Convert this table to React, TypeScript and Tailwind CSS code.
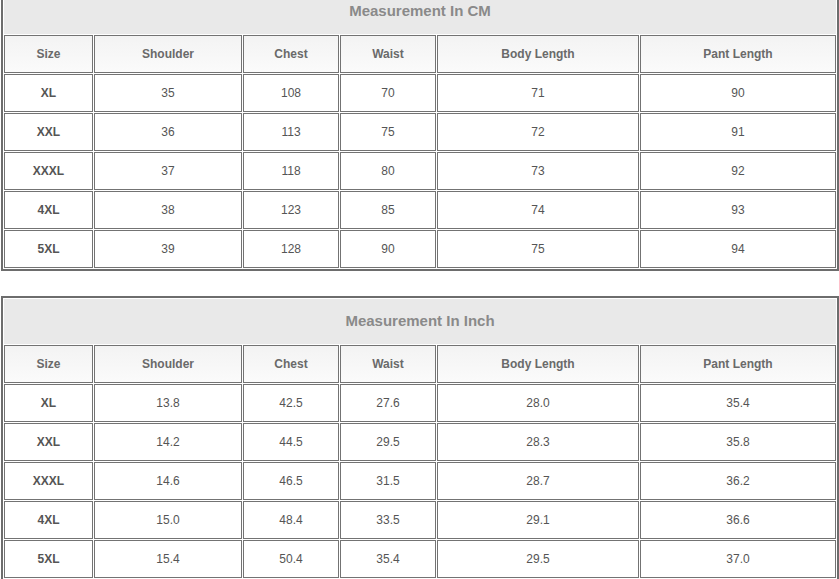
const headers = ["Size", "Shoulder", "Chest", "Waist", "Body Length", "Pant Length"];

const cmRows = [
  ["XL", "35", "108", "70", "71", "90"],
  ["XXL", "36", "113", "75", "72", "91"],
  ["XXXL", "37", "118", "80", "73", "92"],
  ["4XL", "38", "123", "85", "74", "93"],
  ["5XL", "39", "128", "90", "75", "94"],
];

const inchRows = [
  ["XL", "13.8", "42.5", "27.6", "28.0", "35.4"],
  ["XXL", "14.2", "44.5", "29.5", "28.3", "35.8"],
  ["XXXL", "14.6", "46.5", "31.5", "28.7", "36.2"],
  ["4XL", "15.0", "48.4", "33.5", "29.1", "36.6"],
  ["5XL", "15.4", "50.4", "35.4", "29.5", "37.0"],
];

const SizeTable = ({ title, rows, className }: { title: string; rows: string[][]; className?: string }) => {
  return (
    <div
      className={`ml-[1px] w-[838px] border-2 border-[#6d6d6d] p-px grid grid-cols-[89px_148px_96px_96px_202px_196px] gap-px ${className ?? ""}`}
    >
      <div className="col-span-6 h-[45px] bg-[#e9e9e9] flex items-center justify-center text-[15px] font-bold text-[#8a8a8a]">
        {title}
      </div>
      {headers.map((h) => (
        <div
          key={h}
          className="h-[38px] border border-[#737373] bg-gradient-to-b from-[#f3f3f3] to-[#fbfbfb] flex items-center justify-center text-[12px] font-bold text-[#6a6a6a]"
        >
          {h}
        </div>
      ))}
      {rows.map((row) =>
        row.map((cell, i) => (
          <div
            key={row[0] + i}
            className={`h-[38px] border border-[#737373] bg-white flex items-center justify-center text-[12px] text-[#555] ${
              i === 0 ? "font-bold" : ""
            }`}
          >
            {cell}
          </div>
        ))
      )}
    </div>
  );
};

const App = () => {
  return (
    <div className="w-[839px] h-[579px] overflow-hidden bg-white font-['Liberation_Sans',Arial,sans-serif]">
      <SizeTable title="Measurement In CM" rows={cmRows} className="-mt-[14px]" />
      <SizeTable title="Measurement In Inch" rows={inchRows} className="mt-[25px]" />
    </div>
  );
};

export default App;
